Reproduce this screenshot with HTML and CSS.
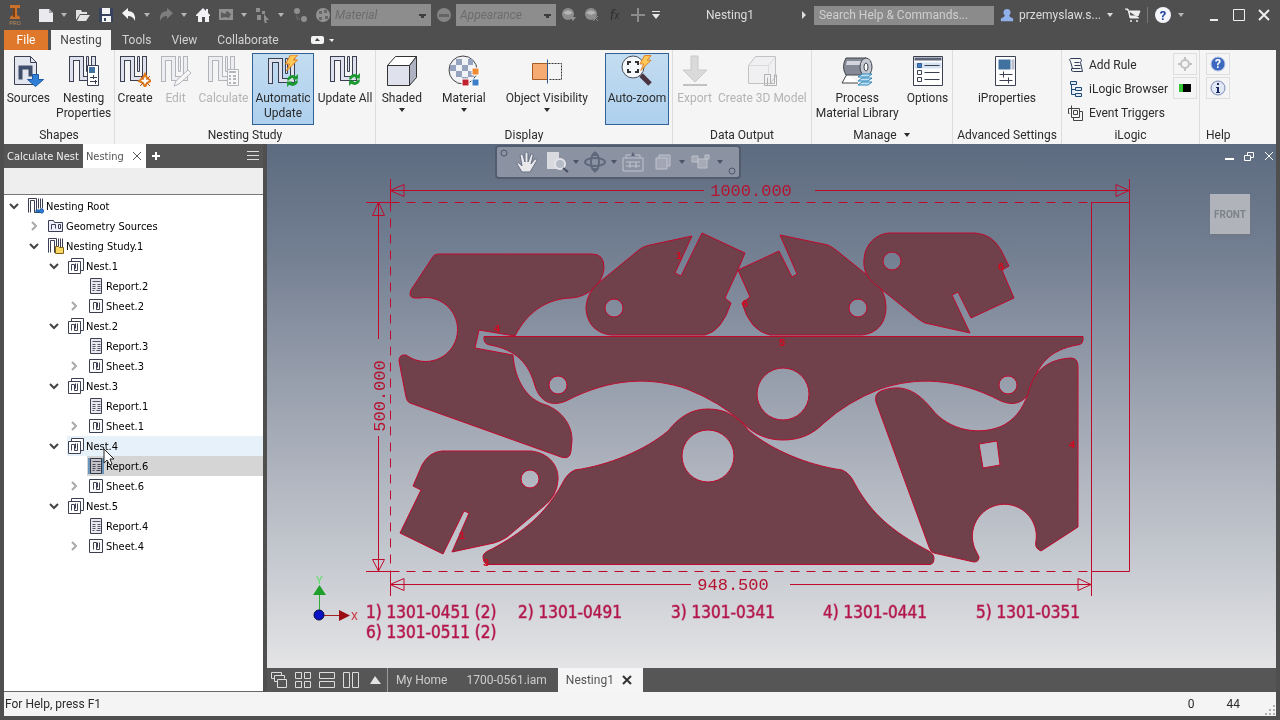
FILE: index.html
```html
<!DOCTYPE html>
<html lang="en">

<head>
    <meta charset="UTF-8">
    <meta name="viewport" content="width=device-width, initial-scale=1.0">
    <title>Nesting1</title>
    <link rel="stylesheet" href="styles.css">
</head>

<body>

    <!-- Shared icon shapes -->
    <svg class="defs" aria-hidden="true">
        <symbol id="caret" viewBox="0 0 8 8"><path d="M1 2h6L4 6z" fill="currentColor"/></symbol>
        <symbol id="nest" viewBox="0 0 32 32">
            <path d="M3.500 27V3.500h10v20h12V1" fill="none" stroke="#3b3f52" stroke-width="5"/>
            <path d="M3.500 26V3.500h10v20h12V2" fill="none" stroke="#dfe2ec" stroke-width="3"/>
            <path d="M18.500 1.500h2v15h-2z" fill="#dfe2ec" stroke="#3b3f52"/>
        </symbol>
        <symbol id="refresh" viewBox="0 0 12 12">
            <path d="M1 6a5 5 0 0 1 8-4l2-2v5H6l1-1a3 3 0 0 0-4 2zM11 6a5 5 0 0 1-8 4l-2 2V7h5L5 8a3 3 0 0 0 4-2z" fill="#1c9a32"/>
        </symbol>
        <symbol id="bolt" viewBox="0 0 14 16">
            <path d="M6 0h7l-4 5h4L2 16l3-7H1z" fill="#ffc95a" stroke="#e07b1c"/>
        </symbol>
        <symbol id="open" viewBox="0 0 10 10"><path d="M1 3l4 4 4-4" fill="none" stroke="#444" stroke-width="2"/></symbol>
        <symbol id="shut" viewBox="0 0 10 10"><path d="M3 1l4 4-4 4" fill="none" stroke="#a9a9a9" stroke-width="2"/></symbol>
        <symbol id="t-nest" viewBox="-0.5 -0.5 16 16">
            <path d="M3 3V0h12v12h-3M0 3h12v12H0z" fill="#fff" stroke="#3c3f52"/>
            <path d="M3 12V6h3v6h3V5M7 5v5" fill="none" stroke="#3c3f52"/>
        </symbol>
        <symbol id="t-sheet" viewBox="-0.5 -0.5 16 16">
            <path d="M1 1h13v13H1z" fill="#fafafa" stroke="#3c3f52"/>
            <path d="M5 11V4h3v7h3V4M9 4v5" fill="none" stroke="#3c3f52"/>
        </symbol>
        <symbol id="t-report" viewBox="-0.5 -0.5 16 16">
            <path d="M2 0h11v15H2z" fill="#e8e8ee" stroke="#3c3f52"/>
            <path d="M4 3h8M4 6h3M9 6h3M4 8h3M9 8h3M4 10h3M9 10h3M4 12h2M8 12h4" stroke="#53566a"/>
        </symbol>
        <symbol id="t-study" viewBox="-0.5 -0.5 16 16">
            <path d="M0 14V0h8v12h2M2 14V2h4v12h6M10 0v10M12 0v10M14 0v10" fill="none" stroke="#3c3f52"/>
        </symbol>
        <symbol id="ball" viewBox="0 0 16 16">
            <circle cx="7" cy="7" r="6" fill="#8d8d8d"/><path d="M2 6q5-5 10 0L7 8z" fill="#b5b5b5"/>
        </symbol>
    </svg>

    <div class="app">

        <header class="titlebar">
            <div class="quick">
                <svg class="logo" viewBox="0 0 16 22"><path d="M3 1h10v3H10v7l3 2v2H3v-2l3-2V4H3z" fill="#c9702b"/><path d="M6 4h2v9H6z" fill="#7b3d12"/><text x="8" y="21" class="logo-text">PRO</text></svg>
                <button class="ibtn" aria-label="New"><svg viewBox="0 0 16 16"><path d="M1 2h10l4 4v9H1z" fill="#e9e9ee"/><path d="M11 2v4h4z" fill="#a5a5ad"/></svg></button>
                <button class="drop" aria-label="New options"><svg><use href="#caret"/></svg></button>
                <button class="ibtn" aria-label="Open"><svg viewBox="0 0 16 16"><path d="M1 13V3h5l1 2h5v2H5zM5 8h10l-4 6H2z" fill="#e2e2e2"/></svg></button>
                <button class="ibtn" aria-label="Save"><svg viewBox="0 0 16 16"><path d="M1 1h14v14H1z" fill="#38445f"/><path d="M4 1h8v6H4zM4 9h9v6H4z" fill="#f4f4f4"/><path d="M6 11h2v3H6z" fill="#38445f"/></svg></button>
                <button class="ibtn" aria-label="Undo"><svg viewBox="0 0 16 16"><path d="M1 6l6-5v3q8 0 7 10-2-5-7-5v3z" fill="#f4f4f4"/></svg></button>
                <button class="drop" aria-label="Undo list"><svg><use href="#caret"/></svg></button>
                <button class="ibtn" aria-label="Redo"><svg viewBox="0 0 16 16"><path d="M15 6L9 1v3Q1 4 2 14q2-5 7-5v3z" fill="#7d7d7d"/></svg></button>
                <button class="drop" aria-label="Redo list"><svg><use href="#caret"/></svg></button>
                <button class="ibtn" aria-label="Home"><svg viewBox="0 0 16 16"><path d="M8 1L1 8v1h2v6h4v-5h3v5h4V9h1V8l-2-2V2h-2v2z" fill="#f1f1f6"/></svg></button>
                <button class="ibtn" aria-label="Projects"><svg viewBox="0 0 16 16"><path d="M1 2h14v11H1z" fill="#909090"/><path d="M3 5l4 2 2-3 4 3-2 4-4-1-4 1z" fill="#5c5c5c"/></svg></button>
                <button class="drop" aria-label="Project options"><svg><use href="#caret"/></svg></button>
                <button class="ibtn" aria-label="Select"><svg viewBox="0 0 16 16"><path d="M1 1h4v4H1zM2 8h4v5H2zM7 4h3v3H7zM9 7l5 6h-3l1 3-2 1-1-4z" fill="#8f8f8f"/></svg></button>
                <button class="drop" aria-label="Select options"><svg><use href="#caret"/></svg></button>
                <button class="ibtn" aria-label="Update"><svg viewBox="0 0 16 16"><circle cx="5" cy="4" r="3" fill="#8f8f8f"/><circle cx="12" cy="12" r="3" fill="#8f8f8f"/><path d="M5 8v4h3" fill="none" stroke="#6e6e6e"/></svg></button>
                <button class="ibtn" aria-label="Color wheel"><svg viewBox="0 0 16 16"><circle cx="8" cy="8" r="7" fill="#929292"/><path d="M4 4h3v3H4zM9 3h3v3H9zM4 10h3v3H4zM10 9h3v3h-3z" fill="#676767"/></svg></button>
            </div>
            <div class="styles">
                <select aria-label="Material"><option>Material</option></select>
                <button class="ibtn" aria-label="Appearance browser"><svg viewBox="0 0 16 16"><circle cx="8" cy="8" r="7" fill="#858585"/><path d="M3 7h10v3H3z" fill="#646464"/></svg></button>
                <select aria-label="Appearance"><option>Appearance</option></select>
            </div>
            <div class="quick">
                <button class="ibtn" aria-label="Adjust"><svg viewBox="0 0 16 16"><use href="#ball"/><path d="M9 10h6l-3 4z" fill="#929292"/></svg></button>
                <button class="ibtn" aria-label="Clear"><svg viewBox="0 0 16 16"><use href="#ball"/><path d="M9 9l5 5M14 9l-5 5" stroke="#929292"/></svg></button>
                <button class="ibtn fx" aria-label="Parameters">f<sub>x</sub></button>
                <button class="ibtn" aria-label="Add"><svg viewBox="0 0 16 16"><path d="M8 1v14M1 8h14" stroke="#8b8b8b" stroke-width="2"/></svg></button>
                <button class="drop" aria-label="Customize"><svg viewBox="0 0 8 8"><path d="M0 0h8v1H0zM0 3h8L4 8z" fill="#e8e8e8"/></svg></button>
            </div>
            <div class="doc-title">Nesting1</div>
            <div class="account">
                <svg class="tick" viewBox="0 0 8 8"><path d="M2 0l4 4-4 4z" fill="#ddd"/></svg>
                <input class="search" type="search" placeholder="Search Help &amp; Commands..." aria-label="Search Help &amp; Commands">
                <button class="user"><svg viewBox="0 0 16 16"><circle cx="8" cy="5" r="4" fill="#8fb0ea"/><path d="M1 15v-3q4-1 5-4h4q1 3 5 4v3z" fill="#8fb0ea"/></svg>przemyslaw.s...<svg class="mini"><use href="#caret"/></svg></button>
                <button class="ibtn" aria-label="Store"><svg viewBox="0 0 16 16"><path d="M0 2h3l2 9h9M4 4h11l-2 5H5z" fill="#eee" stroke="#eee"/><circle cx="6" cy="14" r="1" fill="#eee"/><circle cx="12" cy="14" r="1" fill="#eee"/></svg></button>
                <span class="rule"></span>
                <button class="ibtn" aria-label="Help"><svg viewBox="0 0 16 16"><circle cx="8" cy="8" r="8" fill="#f4f6fb"/><text x="8" y="13" class="q">?</text></svg></button>
                <button class="drop" aria-label="Help options"><svg><use href="#caret"/></svg></button>
            </div>
            <div class="window">
                <button aria-label="Minimize"><svg viewBox="0 0 12 12"><path d="M2 11h8" stroke="#eee" stroke-width="2"/></svg></button>
                <button aria-label="Maximize"><svg viewBox="-0.5 -0.5 12 12"><path d="M0 0h11v11H0z" fill="none" stroke="#eee"/></svg></button>
                <button aria-label="Close"><svg viewBox="0 0 12 12"><path d="M1 1l10 10M11 1L1 11" stroke="#eee" stroke-width="2"/></svg></button>
            </div>
        </header>

        <nav class="tabs">
            <button class="file">File</button>
            <button class="active">Nesting</button>
            <button>Tools</button>
            <button>View</button>
            <button>Collaborate</button>
            <button class="collapse" aria-label="Collapse ribbon"><svg viewBox="0 0 24 10"><rect x="0" y="1" width="13" height="8" rx="2" fill="#f2f2f2"/><path d="M4 6h5L6 3z" fill="#444"/><path d="M18 4h5l-2 3z" fill="#f2f2f2"/></svg></button>
        </nav>

        <div class="ribbon">
            <section class="group">
                <div class="tools">
                    <button class="tool"><svg viewBox="-0.5 -0.5 32 32"><path d="M2 1h16l6 6v22H2z" fill="#e3e6ee" stroke="#3b3f52"/><path d="M18 1v6h6" fill="none" stroke="#3b3f52"/><path d="M8 24V12h10v9" fill="none" stroke="#3f4f6b" stroke-width="4"/><path d="M20 19h6v5h5l-8 7-8-7h5z" fill="#2f7fd6" stroke="#1c5aa5"/></svg>Sources</button>
                    <button class="tool"><svg viewBox="0 0 32 32"><use href="#nest"/><path d="M19.500 10.500h11v20h-11z" fill="#fff" stroke="#3b3f52"/><path d="M21 12h6v6h-6z" fill="#41719f"/><path d="M22 22.500h7M22 26.500h7M25.500 20v4M27.500 25v4" stroke="#3b3f52"/></svg>Nesting<br>Properties</button>
                </div>
                <h2>Shapes</h2>
            </section>

            <section class="group">
                <div class="tools study">
                    <button class="tool"><svg viewBox="0 0 32 32"><use href="#nest"/><path d="M26 19l2 4 4 3-4 2-2 4-2-4-4-2 4-3z" fill="#fff" stroke="#e07b1c" stroke-width="2"/><path d="M21 21l10 10M31 21L21 31" stroke="#b5541c"/><circle cx="26" cy="26" r="2" fill="#fff"/></svg>Create</button>
                    <button class="tool" disabled><svg viewBox="0 0 32 32"><use href="#nest"/><path d="M16 26l12-11 3 3-12 11-5 2z" fill="#fff" stroke="#3b3f52"/></svg>Edit</button>
                    <button class="tool" disabled><svg viewBox="0 0 32 32"><use href="#nest"/><path d="M20.500 14.500h11v16h-11z" fill="#fff" stroke="#3b3f52"/><path d="M22 17h7M22 21h2M26 21h3M22 24h2M26 24h3M22 28h2M26 28h3" stroke="#3b3f52" stroke-width="2"/></svg>Calculate</button>
                    <button class="tool on"><svg viewBox="0 0 32 32"><use href="#nest" y="2"/><use href="#bolt" x="17" y="0" width="15" height="16"/><use href="#refresh" x="19" y="19" width="13" height="13"/></svg>Automatic<br>Update</button>
                    <button class="tool"><svg viewBox="0 0 32 32"><use href="#nest"/><use href="#refresh" x="19" y="18" width="13" height="13"/></svg>Update All</button>
                </div>
                <h2>Nesting Study</h2>
            </section>

            <section class="group">
                <div class="tools wide">
                    <button class="tool"><svg viewBox="-0.5 -0.5 32 32"><path d="M1 10h22v20H1z" fill="#dfe1ec" stroke="#333"/><path d="M1 10l8-9h21l-7 9z" fill="#fff" stroke="#333"/><path d="M30 1v21l-7 8V10z" fill="#aeb2c2" stroke="#333"/></svg>Shaded<svg class="mini"><use href="#caret"/></svg></button>
                    <button class="tool"><svg viewBox="0 0 32 32"><circle cx="15" cy="15" r="14" fill="#f2f3f7" stroke="#444"/><path d="M8 4h6v6H8zM20 4h5v6h-5zM2 10h6v6H2zM14 10h6v6h-6zM8 16h6v6H8zM20 16h6v6h-6zM14 22h6v5h-6z" fill="#96a3bf"/><path d="M24 13h7v7h-7z" fill="#ef8a32" stroke="#fff"/><path d="M14 24h7v7h-7z" fill="#c0202f" stroke="#fff"/><path d="M24 24h7v7h-7z" fill="#3d7fc9" stroke="#fff"/></svg>Material<svg class="mini"><use href="#caret"/></svg></button>
                    <button class="tool"><svg viewBox="-0.5 -0.5 32 32"><path d="M1 8h15v16H1z" fill="#f6ab73" stroke="#a85a26"/><path d="M17 8h13v16H17" fill="none" stroke="#333" stroke-dasharray="2 1"/><path d="M16 4v24" stroke="#2d5b8a"/></svg>Object Visibility<svg class="mini"><use href="#caret"/></svg></button>
                    <button class="tool on"><svg viewBox="0 0 32 32"><path d="M20 20l9 9" stroke="#4a3440" stroke-width="5"/><circle cx="12" cy="12" r="11" fill="#f5f8fa" stroke="#4a4f5c"/><path d="M7 10V7h3M14 7h3v3M17 14v3h-3M10 17H7v-3" fill="none" stroke="#333" stroke-width="2"/><use href="#bolt" x="18" y="0" width="13" height="16"/></svg>Auto-zoom</button>
                </div>
                <h2>Display</h2>
            </section>

            <section class="group">
                <div class="tools">
                    <button class="tool" disabled><svg viewBox="0 0 32 32"><path d="M12 1h7v14h9L16 27 4 15h8z" fill="#aaa" stroke="#777"/><path d="M4 30h24" stroke="#666" stroke-width="2"/></svg>Export</button>
                    <button class="tool" disabled><svg viewBox="-0.5 -0.5 32 32"><path d="M2 28V10l7-9h20v20l-5 7z" fill="#e9e9ee" stroke="#666"/><path d="M2 10h20l7-9M22 10v8" fill="none" stroke="#aaa"/><path d="M18 30V19h6v9h4V19M21 30V22M30 19v11H18" fill="none" stroke="#333"/></svg>Create 3D Model</button>
                </div>
                <h2>Data Output</h2>
            </section>

            <section class="group">
                <div class="tools manage">
                    <button class="tool"><svg viewBox="0 0 32 32"><path d="M6 19L1 28h16" fill="#fff" stroke="#444"/><path d="M5 3h20v17H5q-5-8 0-17z" fill="#858995" stroke="#41444e"/><path d="M6 6h17v4H5z" fill="#d3d5dc"/><ellipse cx="25" cy="12" rx="6" ry="9" fill="#c6c9d2" stroke="#41444e"/><ellipse cx="25" cy="12" rx="2" ry="4" fill="#fff" stroke="#41444e"/><path d="M17 22l4-3h10l-4 3zM17 26l4-3h10l-4 3zM17 30l4-3h10l-4 3z" fill="#bfe2f7" stroke="#2f86b9"/></svg>Process<br>Material Library</button>
                    <button class="tool"><svg viewBox="-0.5 -0.5 32 32"><path d="M1 1h29v29H1z" fill="#fff" stroke="#3b3f52"/><path d="M2 2h27v3H2z" fill="#5d6478"/><path d="M2 7h27v6H2z" fill="#d5e3f3"/><path d="M5 8h4v4H5zM5 15h4v4H5zM5 22h4v4H5z" fill="#fff" stroke="#3b3f52"/><path d="M5 8h4v4H5z" fill="#3d7fc9"/><path d="M12 10h15M12 17h15M12 24h15" stroke="#3b3f52"/></svg>Options</button>
                </div>
                <h2>Manage <svg class="mini"><use href="#caret"/></svg></h2>
            </section>

            <section class="group">
                <div class="tools">
                    <button class="tool"><svg viewBox="-0.5 -0.5 32 32"><path d="M4 1h20v29H4z" fill="#fff" stroke="#3b3f52"/><path d="M7 4h12v10H7z" fill="#41719f"/><path d="M20 4h3v10h-3z" fill="#b9bdd0"/><path d="M8 19h13M8 25h13M12 16v6M17 22v6" stroke="#3b3f52"/></svg>iProperties</button>
                </div>
                <h2>Advanced Settings</h2>
            </section>

            <section class="group">
                <div class="split">
                    <div class="rows">
                        <button class="row"><svg viewBox="-0.5 -0.5 16 16"><path d="M2 1h10q2 2 0 4l2 9H5q-3 0-2-3h9M4 11L2 4q-2-2 0-3M6 5h5M6 8h6" fill="none" stroke="#2f3b57"/></svg>Add Rule</button>
                        <button class="row"><svg viewBox="-0.5 -0.5 16 16"><path d="M2 0h6v3H2zM7 6h6v3H7zM7 12h6v3H7zM3 3v10h4M3 8h4" fill="#dfe8f5" stroke="#1f4a78"/></svg>iLogic Browser</button>
                        <button class="row"><svg viewBox="-0.5 -0.5 16 16"><path d="M0 3h11v9H3V0M0 3v5h1M5 5h4v4H5zM5 12v3h9V6h-3" fill="none" stroke="#444"/></svg>Event Triggers</button>
                    </div>
                    <div class="smalls">
                        <button class="small" aria-label="Freeze rules"><svg viewBox="0 0 16 16"><circle cx="8" cy="8" r="4" fill="none" stroke="#c2c2c2" stroke-width="2"/><path d="M8 1v3M8 12v3M1 8h3M12 8h3" stroke="#c2c2c2" stroke-width="2"/></svg></button>
                        <button class="small" aria-label="Rule status"><svg viewBox="0 0 16 16"><path d="M2 4h4v8H2z" fill="#35c435"/><path d="M6 4h8v8H6z" fill="#000"/></svg></button>
                    </div>
                </div>
                <h2>iLogic</h2>
            </section>

            <section class="group last">
                <div class="smalls">
                    <button class="small" aria-label="Help topics"><svg viewBox="0 0 16 16"><circle cx="8" cy="8" r="7" fill="#3c68c0" stroke="#b9c6e6"/><text x="8" y="12" class="q light">?</text></svg></button>
                    <button class="small" aria-label="About"><svg viewBox="0 0 16 16"><circle cx="8" cy="8" r="7" fill="#e3e8f7" stroke="#7a89b5"/><path d="M7 3h2v2H7zM6 7h3v5h1v1H6v-1h1V8H6z" fill="#1c2c63"/></svg></button>
                </div>
                <h2>Help</h2>
            </section>
        </div>

        <main class="work">

            <aside class="browser">
                <div class="browser-tabs">
                    <button>Calculate Nest</button>
                    <button class="active">Nesting <svg viewBox="0 0 10 10"><path d="M1 1l8 8M9 1L1 9" stroke="#555"/></svg></button>
                    <button aria-label="Add tab"><svg viewBox="0 0 10 10"><path d="M5 1v8M1 5h8" stroke="#fff" stroke-width="2"/></svg></button>
                    <button class="menu" aria-label="Panel menu"><svg viewBox="0 -0.5 12 12"><path d="M0 1h12M0 5h12M0 9h12" stroke="#ddd"/></svg></button>
                </div>
                <div class="browser-bar"></div>
                <ul class="tree">
                    <li>
                        <div class="node"><svg class="twist"><use href="#open"/></svg><span><svg viewBox="0 0 16 16"><use href="#t-study"/><path d="M8 12h4a2 2 0 1 1 0 2H8z" fill="#2f7fd6" stroke="#1c5aa5"/></svg>Nesting Root</span></div>
                        <ul>
                            <li><div class="node"><svg class="twist"><use href="#shut"/></svg><span><svg viewBox="-0.5 -0.5 16 16"><path d="M0 13V2h5l1 2h8v9z" fill="#eef" stroke="#3c3f52"/><path d="M3 11V6h4v4M10 6h2v4h-2z" fill="none" stroke="#3c3f52"/></svg>Geometry Sources</span></div></li>
                            <li>
                                <div class="node"><svg class="twist"><use href="#open"/></svg><span><svg viewBox="0 0 16 16"><use href="#t-study"/><path d="M7.500 15.500v-7h3l1 1h4v6z" fill="#fbd562" stroke="#7d6318"/></svg>Nesting Study.1</span></div>
                                <ul>
                                    <li>
                                        <div class="node"><svg class="twist"><use href="#open"/></svg><span><svg><use href="#t-nest"/></svg>Nest.1</span></div>
                                        <ul>
                                            <li><div class="node"><i class="twist"></i><span><svg><use href="#t-report"/></svg>Report.2</span></div></li>
                                            <li><div class="node"><svg class="twist"><use href="#shut"/></svg><span><svg><use href="#t-sheet"/></svg>Sheet.2</span></div></li>
                                        </ul>
                                    </li>
                                    <li>
                                        <div class="node"><svg class="twist"><use href="#open"/></svg><span><svg><use href="#t-nest"/></svg>Nest.2</span></div>
                                        <ul>
                                            <li><div class="node"><i class="twist"></i><span><svg><use href="#t-report"/></svg>Report.3</span></div></li>
                                            <li><div class="node"><svg class="twist"><use href="#shut"/></svg><span><svg><use href="#t-sheet"/></svg>Sheet.3</span></div></li>
                                        </ul>
                                    </li>
                                    <li>
                                        <div class="node"><svg class="twist"><use href="#open"/></svg><span><svg><use href="#t-nest"/></svg>Nest.3</span></div>
                                        <ul>
                                            <li><div class="node"><i class="twist"></i><span><svg><use href="#t-report"/></svg>Report.1</span></div></li>
                                            <li><div class="node"><svg class="twist"><use href="#shut"/></svg><span><svg><use href="#t-sheet"/></svg>Sheet.1</span></div></li>
                                        </ul>
                                    </li>
                                    <li>
                                        <div class="node hovered"><svg class="twist"><use href="#open"/></svg><span><svg><use href="#t-nest"/></svg>Nest.4</span>
                                            <svg class="pointer" viewBox="0 0 12 18"><path d="M1 1v14l3-3 3 5 2-1-2-5h4z" fill="#fff" stroke="#222"/></svg>
                                        </div>
                                        <ul>
                                            <li><div class="node selected"><i class="twist"></i><span><svg><use href="#t-report"/></svg>Report.6</span></div></li>
                                            <li><div class="node"><svg class="twist"><use href="#shut"/></svg><span><svg><use href="#t-sheet"/></svg>Sheet.6</span></div></li>
                                        </ul>
                                    </li>
                                    <li>
                                        <div class="node"><svg class="twist"><use href="#open"/></svg><span><svg><use href="#t-nest"/></svg>Nest.5</span></div>
                                        <ul>
                                            <li><div class="node"><i class="twist"></i><span><svg><use href="#t-report"/></svg>Report.4</span></div></li>
                                            <li><div class="node"><svg class="twist"><use href="#shut"/></svg><span><svg><use href="#t-sheet"/></svg>Sheet.4</span></div></li>
                                        </ul>
                                    </li>
                                </ul>
                            </li>
                        </ul>
                    </li>
                </ul>
            </aside>

            <div class="document">
                <div class="canvas">
                    <svg class="drawing" viewBox="267 144 1009 524">
                        <!-- Sheet outline and dimensions -->
                        <g class="line">
                            <path class="dash" d="M390.500 202.500H1091M390.500 202.500V571M390.500 571.500H1091"/>
                            <path d="M390.500 179V202M390.500 571V596M366 202.500H390M366 571.500H390"/>
                            <path d="M1091 202.500H1129.500M1091 571.500H1129.500V179M1091.500 202V596"/>
                            <path d="M390 190.500H704M815 190.500H1129M404 184.500V196.500L390 190.500zM1116 184.500V196.500L1129 190.500z"/>
                            <path d="M390 584.500H691M790 584.500H1091M404 578.500V590.500L390 584.500zM1078 578.500V590.500L1091 584.500z"/>
                            <path d="M378.500 202V339M378.500 436V571M372.500 215.500H384.500L378.500 202zM372.500 559.500H384.500L378.500 571z"/>
                        </g>
                        <g class="dim">
                            <text x="751" y="196">1000.000</text>
                            <text x="733" y="590">948.500</text>
                            <text transform="translate(385 396) rotate(-90)">500.000</text>
                        </g>
                        <!-- Parts -->
                        <g class="part">
                            <path d="M438 254H592Q604 254 604 267C604 281 590 297 571 298C545 299 527 313 515 336L479 330L475 348L513 355C515 382 528 400 546 405C562 411 572 425 572 440L571 451Q570 460 561 457L410 403Q407 402 406 397L399 361Q399 354 406 355L411 358A32 32 0 1 0 420 298L414 298Q408 297 411 290L432 258Q434 254 438 254z"/>
                            <path d="M611 335C593 333 586 320 586 307Q587 291 601 281L640 249Q644 246 650 245L692 236L675 273L681 276L702 233L745 253L737 272L725 298L731 303Q722 331 705 335zM623 308a9 9 0 1 0-18 0a9 9 0 1 0 18 0z"/>
                            <path d="M780 235L828 245Q832 247 836 250L872 279Q886 290 886 307C886 320 880 333 862 335H770Q750 331 742 303L750 297L738 270L779 251L792 277L797 274zM867 308a9 9 0 1 0-18 0a9 9 0 1 0 18 0z"/>
                            <path d="M889 233H975Q992 234 1001 250L1009 266L1002 270L1014 298L971 318L958 292L952 295L970 333L925 323Q921 321 917 318L876 285C866 277 863 269 864 259C865 244 876 234 889 233zM901 261a9 9 0 1 0-18 0a9 9 0 1 0 18 0z"/>
                            <path d="M484 336.500H1083Q1084 345 1077 345C1050 350 1038 364 1032 386C1027 402 1015 407 1001 401C955 377 915 377 880 389Q847 402 824 423C812 435 799 440 783 440C768 440 755 435 743 423Q720 402 687 389C652 377 612 377 566 401C552 407 540 402 535 386C529 364 517 350 490 345Q483 344 484 336.500zM809 394a26 26 0 1 0-52 0a26 26 0 1 0 52 0zM567 385a9 9 0 1 0-18 0a9 9 0 1 0 18 0zM1017 385a9 9 0 1 0-18 0a9 9 0 1 0 18 0z"/>
                            <path d="M487 564.500Q483 563 483 556Q484 552 492 549C523 532 545 515 562 484Q567 473 575 470C610 465 645 450 668 431C680 416 692 409 708 409C725 409 738 416 749 431C772 450 807 465 842 470Q850 473 855 484C872 515 894 532 925 549Q934 553 934 558Q934 564 930 564.500zM734 456a26 26 0 1 0-52 0a26 26 0 1 0 52 0z"/>
                            <path d="M442 451H531C549 453 559 466 558 480Q557 496 544 506L507 537Q501 541 494 543L452 552L469 513L464 511L443 554L400 533L421 490L413 486L422 465Q429 452 442 451zM539 479a9 9 0 1 0-18 0a9 9 0 1 0 18 0z"/>
                            <path d="M876 402Q874 394 881 391C902 383 917 391 931 408C949 432 982 436 1004 425C1018 417 1025 405 1030 387C1037 367 1052 359 1071 358Q1078 358 1078 367V527L1041 551Q1034 548 1036 541A32 32 0 1 0 975 549L979 557Q979 562 974 562L934 553Q931 553 929 547zM979 444L997 441L1000 465L983 468z"/>
                        </g>
                        <g class="mark">
                            <text x="679" y="259">1</text><text x="745" y="307">6</text>
                            <text x="1001" y="270">6</text><text x="782" y="346">5</text>
                            <text x="497" y="332">4</text><text x="1072" y="448">4</text>
                            <text x="462" y="539">1</text><text x="486" y="566">3</text>
                        </g>
                        <g class="legend">
                            <text x="366" y="618">1) 1301-0451 (2)</text>
                            <text x="518" y="618">2) 1301-0491</text>
                            <text x="671" y="618">3) 1301-0341</text>
                            <text x="823" y="618">4) 1301-0441</text>
                            <text x="976" y="618">5) 1301-0351</text>
                            <text x="366" y="638">6) 1301-0511 (2)</text>
                        </g>
                        <!-- Axis triad -->
                        <path d="M319.500 610V595" stroke="#2fae3c"/>
                        <path d="M319.500 585L326 595H313z" fill="#1f9e2a"/>
                        <path d="M324 615.500H340" stroke="#a32020"/>
                        <path d="M350 615.500L339 610V621z" fill="#9b0d12"/>
                        <circle cx="319" cy="615" r="5" fill="#0a12c8" stroke="#06083c"/>
                        <text x="316" y="584" class="axis y">Y</text>
                        <text x="351" y="620" class="axis x">X</text>
                    </svg>

                    <div class="navbar">
                        <svg class="dot" viewBox="0 0 8 8"><circle cx="4" cy="4" r="3" fill="none" stroke="#4e5668"/></svg>
                        <button aria-label="Pan"><svg viewBox="0 0 24 24"><path d="M7 22L2 14q0-3 3 0l2 2L5 5q2-2 3 0l2 7V3q2-2 3 0v9l3-8q3-1 2 2l-2 8 4-5q3 0 1 3l-6 10z" fill="#e8e8ea" stroke="#687085"/></svg></button>
                        <button aria-label="Zoom"><svg viewBox="0 0 24 24"><path d="M2 2h12v17H2z" fill="#d9dadf"/><circle cx="15" cy="14" r="5" fill="#b4bac6" stroke="#e4e4e8" stroke-width="2"/><path d="M18 18l5 4" stroke="#454d5f" stroke-width="2"/></svg></button>
                        <svg class="mini"><use href="#caret"/></svg>
                        <button aria-label="Orbit"><svg viewBox="0 0 24 24"><ellipse cx="12" cy="12" rx="10" ry="4" fill="none" stroke="#5f697c" stroke-width="2"/><ellipse cx="12" cy="12" rx="4" ry="9" fill="none" stroke="#5f697c" stroke-width="2"/><path d="M8 6l4-5 4 5zM8 18l4 5 4-5z" fill="#5f697c"/></svg></button>
                        <svg class="mini"><use href="#caret"/></svg>
                        <button aria-label="Look at"><svg viewBox="0 0 24 24"><path d="M2 8h20v13H2zM5 8V5h14v3M5 12h14M5 16h14M9 12v6M15 12v6" fill="none" stroke="#bfc3cd"/><path d="M10 6h4l-2-4z" fill="#596276"/></svg></button>
                        <button aria-label="View box"><svg viewBox="0 0 24 24"><path d="M5 8h11v11H5zM8 8V5h11v11h-3" fill="#a0a6b3" stroke="#bfc3cd"/></svg></button>
                        <svg class="mini"><use href="#caret"/></svg>
                        <button aria-label="View group"><svg viewBox="0 0 24 24"><path d="M3 6h6v6H3zM9 9h9v9H9zM16 5h4v4h-4z" fill="#a5aab6" stroke="#bcc0cb"/></svg></button>
                        <svg class="mini"><use href="#caret"/></svg>
                        <svg class="dot end" viewBox="0 0 8 8"><circle cx="4" cy="4" r="3" fill="none" stroke="#4e5668"/></svg>
                    </div>

                    <div class="doc-window">
                        <button aria-label="Minimize document"><svg viewBox="0 0 10 10"><path d="M1 8h9" stroke="#fff" stroke-width="2"/></svg></button>
                        <button aria-label="Restore document"><svg viewBox="-0.5 -0.5 10 10"><path d="M0 4h6v5H0zM3 4V1h6v5H6" fill="none" stroke="#fff"/></svg></button>
                        <button aria-label="Close document"><svg viewBox="0 0 10 10"><path d="M1 1l8 8M9 1L1 9" stroke="#fff"/></svg></button>
                    </div>
                    <button class="cube">FRONT</button>
                </div>

                <div class="doc-tabs">
                    <button class="lay" aria-label="Cascade"><svg viewBox="-0.5 -0.5 16 16"><path d="M10 3V0H0v6h3M13 6V3H3v6h3M6 7h9v8H6z" fill="none" stroke="#ddd"/></svg></button>
                    <button class="lay" aria-label="Tile"><svg viewBox="-0.5 -0.5 16 16"><path d="M0 0h6v6H0zM9 0h6v6H9zM0 9h6v6H0zM9 9h6v6H9z" fill="none" stroke="#ddd"/></svg></button>
                    <button class="lay" aria-label="Tile horizontally"><svg viewBox="-0.5 -0.5 16 16"><path d="M0 0h15v6H0zM0 9h15v6H0z" fill="none" stroke="#ddd"/></svg></button>
                    <button class="lay" aria-label="Tile vertically"><svg viewBox="-0.5 -0.5 16 16"><path d="M0 0h6v15H0zM9 0h6v15H9z" fill="none" stroke="#ddd"/></svg></button>
                    <button class="lay" aria-label="Show all tabs"><svg viewBox="0 0 16 16"><path d="M3 12h11L8 4z" fill="#e4e4e4"/></svg></button>
                    <button class="doc-tab first">My Home</button>
                    <button class="doc-tab">1700-0561.iam</button>
                    <button class="doc-tab active">Nesting1 <svg viewBox="0 0 10 10"><path d="M1 1l8 8M9 1L1 9" stroke="#333" stroke-width="2"/></svg></button>
                </div>
            </div>

        </main>

        <footer class="status">
            <span>For Help, press F1</span>
            <span class="count">0</span>
            <span>44</span>
            <svg viewBox="0 0 12 12"><path d="M9 1h2v2H9zM5 5h2v2H5zM9 5h2v2H9zM1 9h2v2H1zM5 9h2v2H5zM9 9h2v2H9z" fill="#b0b0b0"/></svg>
        </footer>

    </div>

</body>

</html>
```

FILE: styles.css
```css
* {
    box-sizing: border-box;
}

body {
    margin: 0;
    font-family: Roboto, "Noto Sans", sans-serif;
    font-size: 12px;
    color: #2b2b2b;
    background-color: #4f4f4f;
}

button,
input,
select {
    font: inherit;
    color: inherit;
    border: none;
    background: none;
    padding: 0;
    margin: 0;
}

svg {
    display: block;
    flex: none;
}

ul {
    list-style: none;
    margin: 0;
    padding: 0;
}

.defs {
    position: absolute;
    width: 0;
    height: 0;
}

.app {
    display: flex;
    flex-direction: column;
    height: 100vh;
    padding: 0 4px 4px;
}

.mini {
    width: 8px;
    height: 8px;
}

/* Title bar */
.titlebar {
    display: flex;
    align-items: center;
    height: 30px;
    color: #dcdcdc;
}

.quick,
.account {
    display: flex;
    align-items: center;
    gap: 6px;
}

.logo {
    width: 16px;
    height: 22px;
    margin: 0 8px 0 3px;
}

.logo-text {
    font-size: 6px;
    text-anchor: middle;
    fill: #b98a5c;
}

.ibtn {
    width: 17px;
    height: 20px;
    display: flex;
    align-items: center;
    justify-content: center;
}

.ibtn svg {
    width: 16px;
    height: 16px;
}

.drop svg {
    width: 8px;
    height: 8px;
}

.drop {
    color: #b5b5b5;
}

.fx {
    font-style: italic;
    color: #303030;
    font-size: 14px;
}

.fx sub {
    font-size: 10px;
}

.styles {
    display: flex;
    align-items: center;
    gap: 4px;
    margin-right: 4px;
}

.styles select {
    width: 100px;
    height: 22px;
    padding: 0 4px;
    appearance: none;
    font-style: italic;
    color: #6c6c6c;
    background: linear-gradient(#3d3d3d, #3d3d3d) right 5px center / 7px 2px no-repeat, linear-gradient(#3d3d3d, #3d3d3d) right 7px top 12px / 3px 2px no-repeat, #8d8d8d;
}

.doc-title {
    flex: 1;
    text-align: center;
}

.tick {
    width: 8px;
    height: 8px;
}

.search {
    width: 180px;
    height: 19px;
    padding: 0 5px;
    background-color: #8b8b8b;
}

.search::placeholder {
    color: #cfcfcf;
    opacity: 1;
}

.user {
    display: flex;
    align-items: center;
    gap: 5px;
    margin-right: 4px;
}

.user svg:first-child {
    width: 14px;
    height: 16px;
}

.rule {
    width: 1px;
    height: 16px;
    background-color: #777;
}

.q {
    font-size: 13px;
    font-weight: bold;
    text-anchor: middle;
    fill: #24479e;
}

.q.light {
    font-size: 12px;
    fill: #fff;
}

.window {
    display: flex;
    margin-left: 16px;
}

.window button {
    width: 25px;
    height: 20px;
    display: flex;
    align-items: center;
    justify-content: center;
}

.window svg {
    width: 12px;
    height: 12px;
}

/* Ribbon */
.tabs {
    display: flex;
    height: 20px;
    color: #d2d2d2;
}

.tabs button {
    padding: 0 10px;
    line-height: 20px;
}

.tabs .file {
    width: 44px;
    margin-right: 3px;
    color: #fff;
    background-color: #e0782b;
}

.tabs .active {
    width: 60px;
    padding: 0;
    margin-right: 1px;
    color: #444;
    background-color: #f5f5f5;
}

.tabs .collapse {
    padding-left: 22px;
}

.collapse svg {
    width: 24px;
    height: 10px;
}

.ribbon {
    display: grid;
    grid-template-columns: 111px 261px 297px 139px 141px 109px 138px 1fr;
    height: 94px;
    background-color: #f5f5f5;
}

.group {
    display: flex;
    flex-direction: column;
    justify-content: space-between;
    align-items: center;
    padding: 3px 0 1px;
    border-right: 1px solid #dcdcdc;
}

.group h2 {
    display: flex;
    align-items: center;
    gap: 6px;
    margin: 0;
    font-size: 12px;
    font-weight: normal;
    line-height: 16px;
}

.last {
    align-items: flex-start;
    padding-left: 6px;
    border-right: none;
}

.tools {
    display: flex;
    height: 72px;
}

.study {
    gap: 1px;
}

.wide {
    gap: 14px;
}

.manage {
    gap: 2px;
}

.tool {
    display: flex;
    flex-direction: column;
    align-items: center;
    min-width: 38px;
    padding: 1px 2px;
    border: 1px solid transparent;
    line-height: 15px;
    white-space: nowrap;
}

.tool svg:first-child {
    width: 32px;
    height: 32px;
    margin-bottom: 4px;
}

.tool:disabled {
    color: #b4b4b4;
}

.tool:disabled svg {
    opacity: 0.35;
}

.tool.on {
    border-color: #2f6296;
    background: linear-gradient(#c3dcf0, #aed0ee);
}

.split {
    display: flex;
    align-self: stretch;
    justify-content: space-between;
    padding: 0 2px 0 6px;
}

.row {
    display: flex;
    align-items: center;
    gap: 5px;
    height: 24px;
}

.row svg {
    width: 16px;
    height: 16px;
}

.smalls {
    display: flex;
    flex-direction: column;
    gap: 2px;
}

.small {
    display: flex;
    align-items: center;
    justify-content: center;
    width: 24px;
    height: 22px;
    border: 1px solid #dedede;
}

.small svg {
    width: 16px;
    height: 16px;
}

/* Browser panel */
.work {
    display: flex;
    flex: 1;
    min-height: 0;
}

.browser {
    display: flex;
    flex-direction: column;
    width: 259px;
    margin-right: 4px;
    font-family: "DejaVu Sans Condensed", "DejaVu Sans", sans-serif;
    font-size: 11px;
    background-color: #fff;
    border-bottom: 1px solid #666;
}

.browser-tabs {
    display: flex;
    height: 24px;
    color: #f2f2f2;
    background-color: #555;
}

.browser-tabs button {
    display: flex;
    align-items: center;
    gap: 8px;
    padding: 0 4px 0 3px;
    white-space: nowrap;
}

.browser-tabs .active {
    color: #555;
    background-color: #fff;
}

.browser-tabs svg {
    width: 10px;
    height: 10px;
}

.browser-tabs button:nth-child(3) {
    padding-left: 5px;
}

.browser-tabs .menu {
    margin-left: auto;
}

.browser-tabs .menu svg {
    width: 12px;
    height: 12px;
}

.browser-bar {
    height: 27px;
    background-color: #eee;
    border-bottom: 1px solid #777;
}

.tree {
    padding-top: 1px;
    color: #000;
}

.tree ul {
    padding-left: 20px;
}

.node {
    position: relative;
    display: flex;
    align-items: center;
    height: 20px;
    padding-left: 5px;
}

.twist {
    width: 10px;
    height: 10px;
    margin-right: 8px;
}

.node span {
    display: flex;
    flex: 1;
    align-items: center;
    gap: 2px;
    height: 20px;
    padding-left: 1px;
}

.node span svg {
    width: 16px;
    height: 16px;
}

.hovered span {
    background-color: #e7f1fa;
}

.selected span {
    background-color: #d5d5d5;
}

.selected span svg {
    background-color: #7fb2e0;
    mix-blend-mode: multiply;
}

.pointer {
    position: absolute;
    left: 59px;
    top: 12px;
    width: 12px;
    height: 18px;
    z-index: 1;
}

/* Drawing area */
.document {
    display: flex;
    flex: 1;
    flex-direction: column;
    min-width: 0;
}

.canvas {
    position: relative;
    flex: 1;
    min-height: 0;
    background: linear-gradient(#5d6b80, #727e91 20%, #9ba2af 48%, #c2c6cd 77%, #e4e4e6);
}

.drawing {
    width: 100%;
    height: 100%;
}

.line path {
    fill: none;
    stroke: #c00a2c;
}

.line .dash {
    stroke-dasharray: 9 7;
}

.part path {
    fill: #70404b;
    fill-rule: evenodd;
    stroke: #c00a2c;
}

.dim {
    font-family: "Liberation Mono", monospace;
    font-size: 17px;
    text-anchor: middle;
    fill: #b5132f;
}

.mark {
    font-family: "Liberation Mono", monospace;
    font-size: 11px;
    font-weight: bold;
    text-anchor: middle;
    fill: #d6081f;
}

.legend {
    font-family: "DejaVu Sans Condensed", "DejaVu Sans", sans-serif;
    font-size: 17px;
    fill: #b3154a;
    stroke: #b3154a;
    stroke-opacity: 0.5;
}

.axis {
    font-size: 11px;
}

.axis.y {
    fill: #5be065;
}

.axis.x {
    fill: #c8323c;
}

.navbar {
    position: absolute;
    left: 228px;
    top: 1px;
    display: flex;
    align-items: center;
    height: 34px;
    padding: 0 3px;
    border: 2px solid #525c6e;
    border-radius: 4px;
    color: #4b5466;
    background-color: #8b92a2;
}

.navbar button {
    padding: 0 3px;
}

.navbar button svg {
    width: 24px;
    height: 24px;
}

.dot {
    width: 8px;
    height: 8px;
    align-self: flex-start;
    margin: 2px 4px 0 0;
}

.dot.end {
    align-self: flex-end;
    margin: 0 0 2px 4px;
}

.doc-window {
    position: absolute;
    right: 2px;
    top: 7px;
    display: flex;
    gap: 10px;
}

.doc-window svg {
    width: 10px;
    height: 10px;
}

.cube {
    position: absolute;
    right: 26px;
    top: 50px;
    width: 40px;
    height: 40px;
    font-size: 10px;
    font-weight: bold;
    color: #7d828b;
    background-color: #b0b3b9;
    box-shadow: 0 2px 3px #6f7886;
}

.doc-tabs {
    display: flex;
    align-items: stretch;
    height: 24px;
    color: #cdcdcd;
    background-color: #565656;
}

.lay {
    width: 24px;
    display: flex;
    align-items: center;
    justify-content: center;
}

.lay svg {
    width: 16px;
    height: 16px;
}

.doc-tab {
    display: flex;
    align-items: center;
    gap: 8px;
    padding: 0 11px 0 8px;
}

.doc-tab.first {
    border-left: 1px solid #999;
}

.doc-tab.active {
    color: #555;
    background-color: #f5f5f5;
}

.doc-tab svg {
    width: 10px;
    height: 10px;
}

.status {
    display: flex;
    align-items: center;
    gap: 32px;
    height: 24px;
    padding-left: 1px;
    background-color: #f4f4f4;
}

.count {
    margin-left: auto;
}

.status svg {
    width: 12px;
    height: 12px;
    margin-left: -8px;
    align-self: flex-end;
}
```
